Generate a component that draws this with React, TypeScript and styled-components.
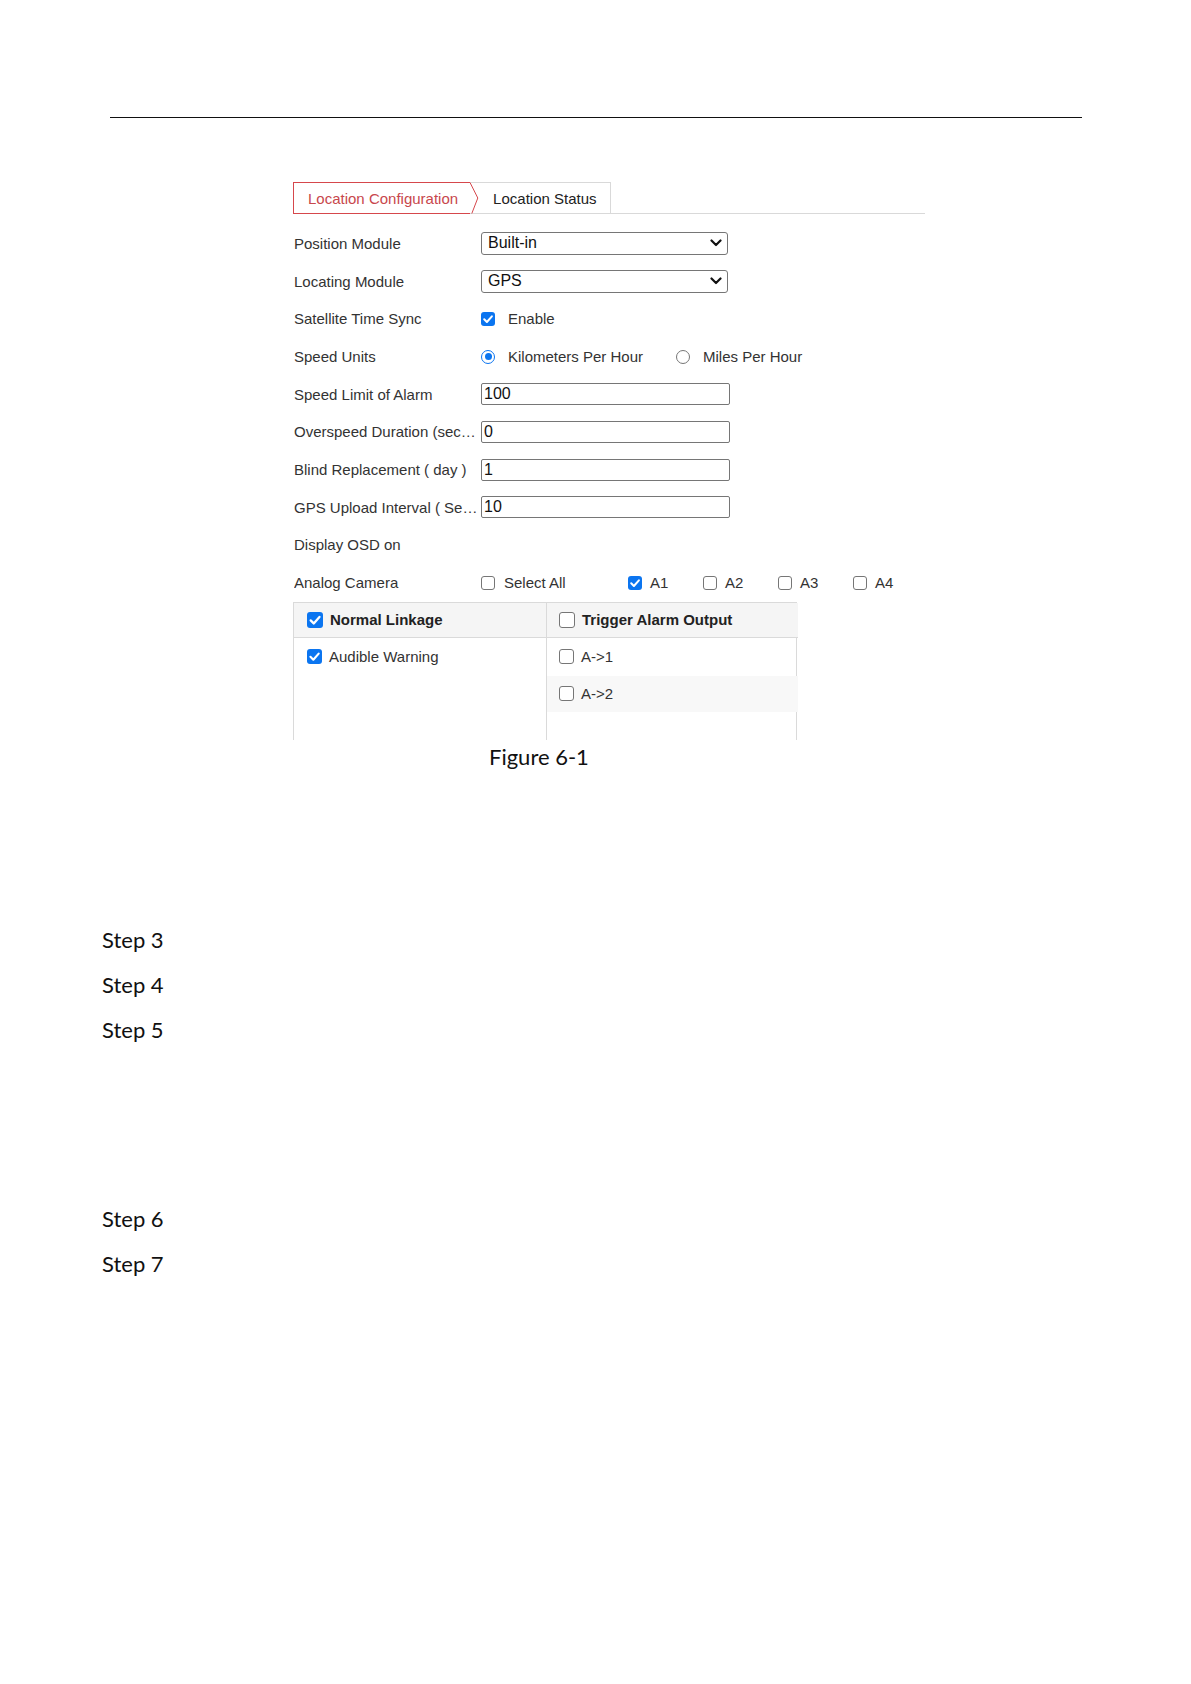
import React from "react";
import styled, { createGlobalStyle } from "styled-components";

const GlobalStyle = createGlobalStyle`
  html, body { margin: 0; padding: 0; background: #ffffff; }
  body {
    width: 1191px;
    min-height: 1684px;
    font-family: "Liberation Sans", Arial, sans-serif;
    color: #333333;
  }
  * { box-sizing: border-box; }
`;

const Page = styled.div`
  width: 1191px;
  min-height: 1684px;
  padding-top: 117px;
`;

const HeaderRule = styled.div`
  margin: 0 109px 0 110px;
  height: 0;
  border-top: 1px solid #111111;
`;

const Figure = styled.section`
  margin: 64px 0 0 293px;
  width: 632px;
`;

const TabBar = styled.div`
  display: flex;
  height: 32px;
  border-bottom: 1px solid #d9d9d9;
`;

const ActiveTab = styled.div`
  position: relative;
  display: flex;
  align-items: center;
  height: 32px;
  margin-bottom: -1px;
  padding: 0 12px 0 14px;
  border: 1px solid #d6474c;
  border-right: none;
  color: #c8474c;
  font-size: 15px;
  white-space: nowrap;
`;

const TabArrow = styled.svg`
  position: absolute;
  left: 100%;
  top: -1px;
  z-index: 1;
  overflow: visible;
`;

const InactiveTab = styled.div`
  display: flex;
  align-items: center;
  height: 31px;
  padding: 0 13px 0 23px;
  border-top: 1px solid #d9d9d9;
  border-right: 1px solid #d9d9d9;
  color: #222222;
  font-size: 15px;
  white-space: nowrap;
`;

const FormRows = styled.div`
  margin-top: 10.65px;
`;

const Row = styled.div`
  display: flex;
  align-items: center;
  height: 37.7px;
  padding-left: 1px;
`;

const Label = styled.div`
  width: 184px;
  margin-right: 3px;
  flex-shrink: 0;
  overflow: hidden;
  white-space: nowrap;
  text-overflow: ellipsis;
  font-size: 15px;
  color: #333333;
`;

const SelectBox = styled.div`
  display: flex;
  align-items: center;
  justify-content: space-between;
  width: 247px;
  height: 23px;
  padding: 0 5px 0 6px;
  border: 1px solid #767676;
  border-radius: 3px;
  font-size: 16px;
  color: #111111;
`;

const TextInput = styled.input`
  width: 249px;
  height: 22px;
  padding: 0 2px;
  border: 1px solid #767676;
  border-radius: 2px;
  font-family: "Liberation Sans", Arial, sans-serif;
  font-size: 16px;
  color: #111111;
  background: #ffffff;
  outline: none;
`;

const OptionGroup = styled.div`
  display: flex;
  align-items: center;
`;

const Option = styled.label<{ $width?: number; $gap?: number }>`
  display: flex;
  align-items: center;
  gap: ${(p) => p.$gap ?? 13}px;
  width: ${(p) => (p.$width ? `${p.$width}px` : "auto")};
  font-size: 15px;
  color: #333333;
  white-space: nowrap;
`;

const BoxShape = styled.span<{ $checked: boolean; $size: number }>`
  display: inline-flex;
  align-items: center;
  justify-content: center;
  flex-shrink: 0;
  width: ${(p) => p.$size}px;
  height: ${(p) => p.$size}px;
  border-radius: 3px;
  border: ${(p) => (p.$checked ? "none" : "1px solid #767676")};
  background: ${(p) => (p.$checked ? "#0b75f0" : "#ffffff")};
`;

const RadioShape = styled.span<{ $checked: boolean }>`
  display: inline-flex;
  align-items: center;
  justify-content: center;
  flex-shrink: 0;
  width: 14px;
  height: 14px;
  border-radius: 50%;
  border: ${(p) => (p.$checked ? "1.5px solid #0b75f0" : "1px solid #767676")};
  background: #ffffff;
`;

const RadioDot = styled.span`
  width: 7px;
  height: 7px;
  border-radius: 50%;
  background: #0b75f0;
`;

const Table = styled.div`
  display: grid;
  grid-template-columns: 253px 251px;
  width: 504px;
  height: 138px;
  border: 1px solid #dadada;
  border-bottom: none;
`;

const Column = styled.div<{ $divider?: boolean }>`
  display: flex;
  flex-direction: column;
  border-right: ${(p) => (p.$divider ? "1px solid #dadada" : "none")};
`;

const HeaderCell = styled.div<{ $pad: number }>`
  display: flex;
  align-items: center;
  gap: 7px;
  height: 35px;
  padding-left: ${(p) => p.$pad}px;
  background: #f5f5f5;
  border-bottom: 1px solid #dadada;
  font-size: 15px;
  font-weight: bold;
  color: #222222;
  white-space: nowrap;
`;

const Cell = styled.div<{ $pad: number; $height: number; $shaded?: boolean }>`
  display: flex;
  align-items: center;
  gap: 7px;
  height: ${(p) => p.$height}px;
  padding-left: ${(p) => p.$pad}px;
  background: ${(p) => (p.$shaded ? "#f8f8f8" : "transparent")};
  font-size: 15px;
  color: #333333;
  white-space: nowrap;
`;

const Caption = styled.div`
  margin-top: 2.5px;
  padding-left: 196px;
  font-family: Lato, "Open Sans", sans-serif;
  font-size: 22px;
  line-height: 30px;
  color: #111111;
`;

const StepList = styled.div`
  margin: 144.5px 0 0 102px;
`;

const Step = styled.div<{ $gapBefore?: number }>`
  margin-top: ${(p) => p.$gapBefore ?? 0}px;
  font-family: Lato, "Open Sans", sans-serif;
  font-size: 22px;
  line-height: 45px;
  color: #111111;
`;

const Checkbox: React.FC<{ checked?: boolean; size?: number }> = ({ checked = false, size = 14 }) => (
  <BoxShape $checked={checked} $size={size}>
    {checked && (
      <svg width={size} height={size} viewBox="0 0 14 14">
        <polyline points="3.2,7.3 5.9,10 10.9,4.3" fill="none" stroke="#ffffff" strokeWidth="2" strokeLinecap="round" strokeLinejoin="round" />
      </svg>
    )}
  </BoxShape>
);

const Radio: React.FC<{ checked?: boolean }> = ({ checked = false }) => (
  <RadioShape $checked={checked}>{checked && <RadioDot />}</RadioShape>
);

const Chevron = () => (
  <svg width="12" height="8" viewBox="0 0 12 8">
    <polyline points="1.5,1.5 6,6 10.5,1.5" fill="none" stroke="#111111" strokeWidth="2.2" strokeLinecap="round" strokeLinejoin="round" />
  </svg>
);

const Select: React.FC<{ value: string }> = ({ value }) => (
  <SelectBox>
    <span>{value}</span>
    <Chevron />
  </SelectBox>
);

const fieldRows = [
  { label: "Speed Limit of Alarm", value: "100" },
  { label: "Overspeed Duration (second)", value: "0" },
  { label: "Blind Replacement ( day )", value: "1" },
  { label: "GPS Upload Interval ( Second )", value: "10" },
];

const cameras = [
  { name: "A1", checked: true },
  { name: "A2", checked: false },
  { name: "A3", checked: false },
  { name: "A4", checked: false },
];

export default function App() {
  return (
    <>
      <GlobalStyle />
      <Page>
        <HeaderRule />
        <Figure>
          <TabBar>
            <ActiveTab>
              Location Configuration
              <TabArrow width="9" height="32" viewBox="0 0 9 32">
                <polyline points="0,0.5 7.8,16 1.8,31.5" fill="none" stroke="#d6474c" strokeWidth="1" />
              </TabArrow>
            </ActiveTab>
            <InactiveTab>Location Status</InactiveTab>
          </TabBar>

          <FormRows>
            <Row>
              <Label>Position Module</Label>
              <Select value="Built-in" />
            </Row>
            <Row>
              <Label>Locating Module</Label>
              <Select value="GPS" />
            </Row>
            <Row>
              <Label>Satellite Time Sync</Label>
              <Option>
                <Checkbox checked />
                Enable
              </Option>
            </Row>
            <Row>
              <Label>Speed Units</Label>
              <OptionGroup>
                <Option $width={195}>
                  <Radio checked />
                  Kilometers Per Hour
                </Option>
                <Option>
                  <Radio />
                  Miles Per Hour
                </Option>
              </OptionGroup>
            </Row>
            {fieldRows.map((r) => (
              <Row key={r.label}>
                <Label title={r.label}>{r.label}</Label>
                <TextInput readOnly value={r.value} />
              </Row>
            ))}
            <Row>
              <Label>Display OSD on</Label>
            </Row>
            <Row>
              <Label>Analog Camera</Label>
              <OptionGroup>
                <Option $width={147} $gap={9}>
                  <Checkbox />
                  Select All
                </Option>
                {cameras.map((c) => (
                  <Option key={c.name} $width={75} $gap={8}>
                    <Checkbox checked={c.checked} />
                    {c.name}
                  </Option>
                ))}
              </OptionGroup>
            </Row>
          </FormRows>

          <Table>
            <Column $divider>
              <HeaderCell $pad={13}>
                <Checkbox checked size={16} />
                Normal Linkage
              </HeaderCell>
              <Cell $pad={13} $height={38}>
                <Checkbox checked size={15} />
                Audible Warning
              </Cell>
            </Column>
            <Column>
              <HeaderCell $pad={12}>
                <Checkbox size={16} />
                Trigger Alarm Output
              </HeaderCell>
              <Cell $pad={12} $height={38}>
                <Checkbox size={15} />
                A-&gt;1
              </Cell>
              <Cell $pad={12} $height={36} $shaded>
                <Checkbox size={15} />
                A-&gt;2
              </Cell>
            </Column>
          </Table>

          <Caption>Figure 6-1</Caption>
        </Figure>

        <StepList>
          <Step>Step 3</Step>
          <Step>Step 4</Step>
          <Step>Step 5</Step>
          <Step $gapBefore={144}>Step 6</Step>
          <Step>Step 7</Step>
        </StepList>
      </Page>
    </>
  );
}
